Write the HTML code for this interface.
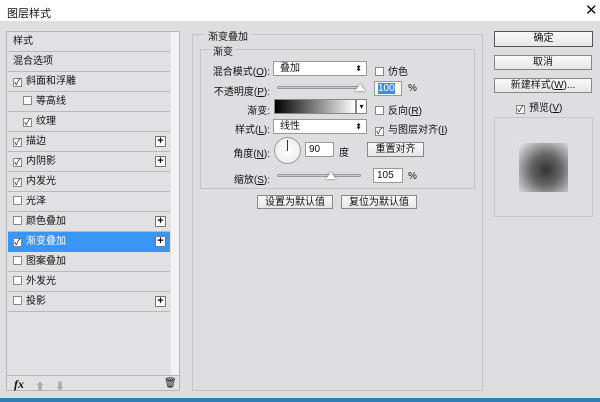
<!DOCTYPE html><html><head><meta charset="utf-8"><style>
*{box-sizing:border-box;margin:0;padding:0}
body{width:600px;height:402px;overflow:hidden;background:#dedddf;font-family:"Liberation Sans","Noto Sans CJK SC",sans-serif;font-size:10px;color:#111;position:relative}
.a{position:absolute}
.title{left:0;top:0;width:600px;height:21px;background:#fff}
.list{left:6px;top:31px;width:174px;height:360px;border:1px solid #b8b8b8;background:#e1e0e2}
.it{position:absolute;left:1px;width:162px;height:20px;border-bottom:1px solid #b9b9b9;line-height:19px;padding-left:5px}
.cb{display:inline-block;width:9px;height:9px;border:1px solid #888;background:#fff;vertical-align:-1px;margin-right:4px;position:relative;font-size:9px;line-height:7px;text-align:center}
.plus{position:absolute;right:4px;top:4px;width:11px;height:11px;border:1px solid #777;background:#fff;font-size:11px;line-height:9px;text-align:center;font-weight:bold}
.btn{position:absolute;border:1px solid #888;background:linear-gradient(#fafafa,#e6e6e6);text-align:center;line-height:13px;font-size:10px}
.box{position:absolute;border:1px solid #c4c4c4}
.lbl{position:absolute;text-align:right;font-size:10px}
.sel{position:absolute;height:15px;border:1px solid #999;background:#fff;line-height:13px;padding-left:6px}
.inp{position:absolute;height:15px;border:1px solid #999;background:#fff;line-height:13px;padding-left:3px;font-size:10px}
.sl{position:absolute;height:3px;border:1px solid #999;background:#ccc;border-radius:2px}
</style></head><body>
<div class="a title"></div>
<div class="a" style="left:7px;top:5px;font-size:11px">图层样式</div>
<div class="a" style="left:585px;top:1px;font-size:15px">✕</div>
<div class="a list">
<div class="it" style="top:0">样式</div>
<div class="it" style="top:20px">混合选项</div>
<div class="it" style="top:40px"><span class="cb">✓</span>斜面和浮雕</div>
<div class="it" style="top:60px;padding-left:15px"><span class="cb"></span>等高线</div>
<div class="it" style="top:80px;padding-left:15px"><span class="cb">✓</span>纹理</div>
<div class="it" style="top:100px"><span class="cb">✓</span>描边<span class="plus">+</span></div>
<div class="it" style="top:120px"><span class="cb">✓</span>内阴影<span class="plus">+</span></div>
<div class="it" style="top:140px"><span class="cb">✓</span>内发光</div>
<div class="it" style="top:160px"><span class="cb"></span>光泽</div>
<div class="it" style="top:180px"><span class="cb"></span>颜色叠加<span class="plus">+</span></div>
<div class="it" style="top:200px;background:#3a96f6;color:#fff;border-color:#3a96f6"><span class="cb" style="color:#000">✓</span>渐变叠加<span class="plus" style="color:#000">+</span></div>
<div class="it" style="top:220px"><span class="cb"></span>图案叠加</div>
<div class="it" style="top:240px"><span class="cb"></span>外发光</div>
<div class="it" style="top:260px"><span class="cb"></span>投影<span class="plus">+</span></div>
<div class="a" style="left:164px;top:0;width:8px;height:343px;background:#f2f2f2"></div>
<div class="a" style="left:0;top:343px;width:172px;border-top:1px solid #b8b8b8"></div>
<div class="a" style="left:7px;top:345px;font-style:italic;font-family:'Liberation Serif',serif;font-size:12px;font-weight:bold">fx</div>
<div class="a" style="left:28px;top:346px;color:#aaa">⬆</div>
<div class="a" style="left:48px;top:346px;color:#aaa">⬇</div>
<div class="a" style="left:157px;top:346px">🗑</div>
</div>
<div class="box" style="left:192px;top:34px;width:291px;height:357px"></div>
<div class="a" style="left:204px;top:28px;background:#dedddf;padding:0 4px">渐变叠加</div>
<div class="box" style="left:200px;top:49px;width:275px;height:140px"></div>
<div class="a" style="left:210px;top:43px;background:#dedddf;padding:0 3px">渐变</div>
<div class="lbl" style="left:200px;width:70px;top:63px">混合模式(<u>O</u>):</div>
<div class="sel" style="left:273px;top:61px;width:94px">叠加<span style="position:absolute;right:4px;font-size:8px">⬍</span></div>
<div class="a" style="left:375px;top:63px"><span class="cb"></span>仿色</div>
<div class="lbl" style="left:200px;width:70px;top:83px">不透明度(<u>P</u>):</div>
<div class="sl" style="left:277px;top:86px;width:84px"></div>
<div class="a" style="left:355px;top:84px;width:0;height:0;border:5px solid transparent;border-bottom:7px solid #fff;border-top:0;filter:drop-shadow(0 0 1px #555)"></div>
<div class="inp" style="left:374px;top:81px;width:28px"><span style="background:#3a8ee6;color:#fff">100</span></div>
<div class="a" style="left:408px;top:83px;font-size:10px">%</div>
<div class="lbl" style="left:200px;width:70px;top:102px">渐变:</div>
<div class="a" style="left:274px;top:99px;width:82px;height:15px;border:1px solid #888;background:linear-gradient(90deg,#000,#fff)"></div>
<div class="a" style="left:356px;top:99px;width:11px;height:15px;border:1px solid #888;background:#fff;font-size:8px;text-align:center;line-height:13px">▾</div>
<div class="a" style="left:375px;top:102px"><span class="cb"></span>反向(<u>R</u>)</div>
<div class="lbl" style="left:200px;width:70px;top:121px">样式(<u>L</u>):</div>
<div class="sel" style="left:273px;top:119px;width:94px">线性<span style="position:absolute;right:4px;font-size:8px">⬍</span></div>
<div class="a" style="left:375px;top:121px"><span class="cb">✓</span>与图层对齐(<u>I</u>)</div>
<div class="lbl" style="left:200px;width:70px;top:145px">角度(<u>N</u>):</div>
<div class="a" style="left:274px;top:137px;width:27px;height:27px;border:1px solid #999;border-radius:50%;background:radial-gradient(#fff,#e8e8e8)"></div>
<div class="a" style="left:287px;top:140px;width:1px;height:11px;background:#333"></div>
<div class="inp" style="left:305px;top:142px;width:29px">90</div>
<div class="a" style="left:339px;top:144px">度</div>
<div class="btn" style="left:367px;top:142px;width:57px;height:15px">重置对齐</div>
<div class="lbl" style="left:200px;width:70px;top:171px">缩放(<u>S</u>):</div>
<div class="sl" style="left:277px;top:174px;width:84px"></div>
<div class="a" style="left:326px;top:172px;width:0;height:0;border:5px solid transparent;border-bottom:7px solid #fff;border-top:0;filter:drop-shadow(0 0 1px #555)"></div>
<div class="inp" style="left:373px;top:168px;width:30px">105</div>
<div class="a" style="left:408px;top:171px;font-size:10px">%</div>
<div class="btn" style="left:257px;top:195px;width:76px;height:14px">设置为默认值</div>
<div class="btn" style="left:341px;top:195px;width:76px;height:14px">复位为默认值</div>
<div class="btn" style="left:494px;top:31px;width:99px;height:16px;border-color:#555">确定</div>
<div class="btn" style="left:494px;top:55px;width:98px;height:15px">取消</div>
<div class="btn" style="left:494px;top:78px;width:98px;height:15px">新建样式(<u>W</u>)...</div>
<div class="a" style="left:516px;top:99px"><span class="cb">✓</span>预览(<u>V</u>)</div>
<div class="box" style="left:494px;top:117px;width:99px;height:100px;border-color:#c8c8c8"></div>
<div class="a" style="left:519px;top:143px;width:49px;height:49px;background:radial-gradient(circle at 55% 55%,#333,#666 40%,#aaa 70%,#eee)"></div>
<div class="a" style="left:0;top:398px;width:600px;height:4px;background:#2f7fb5"></div>
</body></html>
